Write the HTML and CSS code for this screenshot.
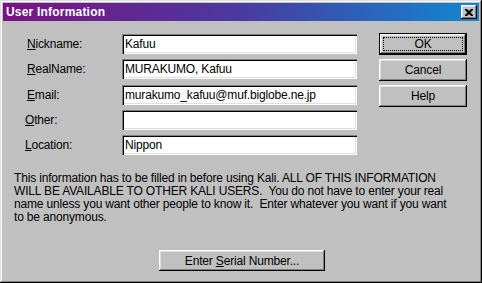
FILE: index.html
```html
<!DOCTYPE html>
<html lang="en">
<head>
  <meta charset="UTF-8" />
  <title>User Information</title>
  <link rel="stylesheet" href="styles.css">
</head>
<body>
  <div class="window">
    <div class="titlebar">
      <span class="title">User Information</span>
      <button class="close-btn" aria-label="Close">
        <svg width="8" height="7" viewBox="0 0 8 7">
          <path d="M0 0h2l2 2l2-2h2v1l-2.5 2.5l2.5 2.5v1h-2l-2-2l-2 2h-2v-1l2.5-2.5l-2.5-2.5z" fill="#000"/>
        </svg>
      </button>
    </div>

    <div class="content">
      <div class="top-row">
        <div class="fields">
          <label class="field-label"><u>N</u>ickname:</label>
          <div class="input">Kafuu</div>
          <label class="field-label"><u>R</u>ealName:</label>
          <div class="input">MURAKUMO, Kafuu</div>
          <label class="field-label"><u>E</u>mail:</label>
          <div class="input">murakumo_kafuu@muf.biglobe.ne.jp</div>
          <label class="field-label shift-left"><u>O</u>ther:</label>
          <div class="input"></div>
          <label class="field-label shift-left"><u>L</u>ocation:</label>
          <div class="input">Nippon</div>
        </div>

        <div class="actions">
          <button class="btn default"><span class="focus">OK</span></button>
          <button class="btn">Cancel</button>
          <button class="btn">Help</button>
        </div>
      </div>

      <p class="notice">
        This information has to be filled in before using Kali. ALL OF THIS INFORMATION<br>
        WILL BE AVAILABLE TO OTHER KALI USERS.&nbsp; You do not have to enter your real<br>
        name unless you want other people to know it.&nbsp; Enter whatever you want if you want<br>
        to be anonymous.
      </p>

      <div class="bottom-row">
        <button class="btn serial">Enter <u>S</u>erial Number...</button>
      </div>
    </div>
  </div>
</body>
</html>
```

FILE: styles.css
```css
:root {
  --face: #c0c0c0;
  --light: #dfdfdf;
  --shadow: #808080;
  --dark: #000;
  --title-left: #7c1282;
  --title-right: #1088d2;
}

body {
  margin: 0;
  font-family: 'Liberation Sans', Arial, sans-serif;
  font-size: 12px;
  letter-spacing: -0.17px;
  color: #000;
  background: var(--face);
}

.window {
  width: 482px;
  height: 283px;
  box-sizing: border-box;
  padding: 3px;
  background: var(--face);
  box-shadow: inset -1px -1px 0 var(--dark), inset 1px 1px 0 var(--light),
              inset -2px -2px 0 var(--shadow), inset 2px 2px 0 #fff;
  display: flex;
  flex-direction: column;
}

.titlebar {
  height: 18px;
  display: flex;
  align-items: center;
  justify-content: space-between;
  padding: 0 2px 0 3px;
  background: linear-gradient(to right, var(--title-left), #4a3aa0 50%, var(--title-right));
}

.title {
  color: #fff;
  font-weight: bold;
  font-size: 12px;
  letter-spacing: 0.2px;
}

.close-btn {
  width: 16px;
  height: 14px;
  padding: 0;
  border: none;
  background: var(--face);
  display: flex;
  align-items: center;
  justify-content: center;
  box-shadow: inset -1px -1px 0 var(--dark), inset 1px 1px 0 #fff,
              inset -2px -2px 0 var(--shadow), inset 2px 2px 0 var(--light);
}

.content {
  flex: 1;
  display: flex;
  flex-direction: column;
}

.top-row {
  display: flex;
  padding-top: 12px;
}

.fields {
  display: grid;
  grid-template-columns: 97px 235px;
  grid-auto-rows: 20px;
  row-gap: 5.3px;
  padding-left: 22px;
  padding-top: 1px;
}

.field-label {
  display: flex;
  align-items: center;
  padding-left: 2px;
}

.field-label.shift-left {
  padding-left: 0;
}

.input {
  background: #fff;
  box-sizing: border-box;
  padding: 2px 3px 0;
  line-height: 16px;
  white-space: nowrap;
  box-shadow: inset 1px 1px 0 var(--shadow), inset 2px 2px 0 var(--dark),
              inset -1px -1px 0 #fff, inset -2px -2px 0 var(--light);
}

.actions {
  display: flex;
  flex-direction: column;
  gap: 4px;
  margin-left: 22px;
}

.btn {
  width: 88px;
  height: 22px;
  padding: 0;
  border: none;
  font: inherit;
  letter-spacing: inherit;
  color: #000;
  background: var(--face);
  box-shadow: inset -1px -1px 0 var(--dark), inset 1px 1px 0 #fff,
              inset -2px -2px 0 var(--shadow), inset 2px 2px 0 var(--light);
}

.btn.default {
  box-shadow: inset 0 0 0 1px var(--dark),
              inset -2px -2px 0 var(--dark), inset 2px 2px 0 #fff,
              inset -3px -3px 0 var(--shadow), inset 3px 3px 0 var(--light);
  display: flex;
  padding: 4px;
}

.btn .focus {
  flex: 1;
  border: 1px dotted #000;
  display: flex;
  align-items: center;
  justify-content: center;
}

.notice {
  margin: 17px 0 0 11px;
  line-height: 13px;
}

.bottom-row {
  margin-top: auto;
  padding-bottom: 9px;
  padding-left: 156px;
}

.btn.serial {
  width: 166px;
  height: 21px;
}
```
